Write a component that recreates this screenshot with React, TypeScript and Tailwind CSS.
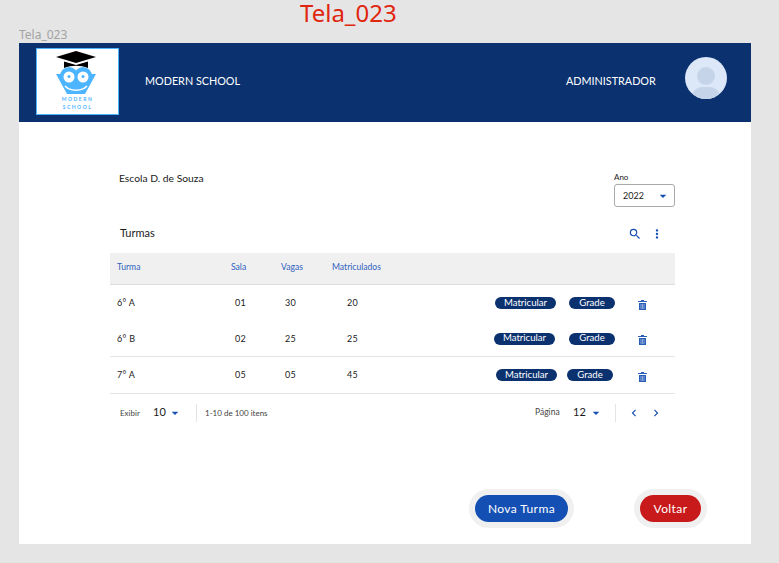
import { MdArrowDropDown, MdChevronLeft, MdChevronRight, MdMoreVert, MdSearch } from 'react-icons/md';

const turmas = [
  { nome: '6° A', sala: '01', vagas: '30', matriculados: '20', acoes: 'ml-[138px] gap-[13px]', linha: 'h-[36px]' },
  { nome: '6° B', sala: '02', vagas: '25', matriculados: '25', acoes: 'ml-[137px] gap-[14px]', linha: 'h-[36px] border-b border-[#e4e4e4]' },
  { nome: '7° A', sala: '05', vagas: '05', matriculados: '45', acoes: 'ml-[139px] gap-[10px]', linha: 'h-[37px] border-b border-[#e4e4e4]' },
];

function Logo() {
  return (
    <div className="flex h-[67px] w-[83px] flex-col items-center border border-[#4db5ff] bg-white">
      <svg viewBox="0 0 81 46" className="h-[46px] w-[81px] shrink-0">
        {/* capelo */}
        <path d="M19 8 39 2l20 6-20 6z" fill="#000" />
        <path d="M27 12.5V19c8-3 16-3 24 0v-6.500L39 16z" fill="#000" />
        {/* rosto */}
        <path d="M19 25H59L48 45H30z" fill="#4db5ff" />
        <circle cx="32" cy="27" r="9" fill="#4db5ff" />
        <circle cx="46" cy="27" r="9" fill="#4db5ff" />
        <circle cx="32" cy="28" r="5.500" fill="#fff" />
        <circle cx="46" cy="28" r="5.500" fill="#fff" />
        <circle cx="32" cy="27.500" r="1.500" fill="#4db5ff" />
        <circle cx="46" cy="27.500" r="1.500" fill="#4db5ff" />
        <path d="M28 37c5 5.500 17 5.500 22 0" stroke="#fff" strokeWidth="1.500" fill="none" />
      </svg>
      <span className="text-[5px] leading-[8px] font-bold tracking-[1.5px] text-[#4db5ff]">MODERN</span>
      <span className="text-[5px] leading-[8px] font-bold tracking-[1.5px] text-[#4db5ff]">SCHOOL</span>
    </div>
  );
}

function Lixeira() {
  return (
    <svg viewBox="0 0 9 10" className="mt-[3px] h-[10px] w-[9px] shrink-0 text-[#2a5db8]">
      <path d="M3 0h3v1h3v1H0V1h3z" fill="currentColor" />
      <path d="M1 3h7v7H1z" fill="currentColor" />
      <path d="M3 4v5M4.500 4v5M6 4v5" stroke="#c9d8f0" strokeWidth="0.600" />
    </svg>
  );
}

function Pill({ children, className }: { children: string; className: string }) {
  return (
    <span className={`flex h-3 items-center justify-center rounded-full bg-[#0b326f] text-[9.6px] text-white ${className}`}>
      {children}
    </span>
  );
}

export default function App() {
  return (
    <div className="h-[563px] w-[779px] overflow-hidden bg-[#e5e5e5] font-['Lato',sans-serif] text-[#1a1a1a]">
      <div className="h-[29px] pl-[300px] font-['Noto_Sans',sans-serif] text-[24px] leading-[25px] text-[#e0260f]">Tela_023</div>
      <div className="h-[14px] pl-[19px] font-['Noto_Sans',sans-serif] text-[12px] leading-[12px] text-[#a3a3a3]">Tela_023</div>

      <div className="ml-[19px] h-[501px] w-[732px] bg-white">
        {/* topo */}
        <header className="flex h-[79px] items-start bg-[#0b326f] pl-[17px] text-white">
          <div className="mt-[5px]">
            <Logo />
          </div>
          <span className="mt-[30px] ml-[26px] w-[421px] text-[10.8px] leading-4">MODERN SCHOOL</span>
          <span className="mt-[30px] w-[119px] text-[10.8px] leading-4">ADMINISTRADOR</span>
          <div className="relative mt-[14px] h-[42px] w-[42px] overflow-hidden rounded-full bg-[#dce7f8]">
            <div className="absolute top-[10px] left-[12px] h-[18px] w-[18px] rounded-full bg-[#c6d4ea]" />
            <div className="absolute top-[30px] left-[7px] h-[20px] w-[28px] rounded-full bg-[#c6d4ea]" />
          </div>
        </header>

        <div className="h-[63px] pt-[47px] pl-[100px] text-[10.3px] leading-[19px]">Escola D. de Souza</div>

        <div className="-mt-[13px] ml-[595px] w-[61px]">
          <div className="mb-[2px] text-[8px] leading-[10px]">Ano</div>
          <div className="flex h-[23px] items-center rounded-[3px] border border-[#aaaaaa] pr-[3px] pl-2 text-[9px]">
            <span className="flex-1">2022</span>
            <MdArrowDropDown className="text-[16px] text-[#1450b4]" />
          </div>
        </div>

        {/* tabela */}
        <div className="mt-[12px] ml-[91px] w-[565px]">
          <div className="flex h-[34px] items-start">
            <span className="ml-[10px] flex-1 text-[11px] leading-[28px]">Turmas</span>
            <MdSearch className="mt-[8px] mr-[8px] text-[14px] text-[#1450b4]" />
            <MdMoreVert className="mt-[8px] mr-[11px] text-[14px] text-[#1450b4]" />
          </div>

          <div className="flex h-[32px] items-center border-b border-[#dddddd] bg-[#f0f0f0] pb-[3px] pl-[7px] text-[8.6px] text-[#2f62c0]">
            <span className="w-[114px] shrink-0">Turma</span>
            <span className="w-[50px] shrink-0">Sala</span>
            <span className="w-[51px] shrink-0">Vagas</span>
            <span>Matriculados</span>
          </div>

          {turmas.map((turma) => (
            <div key={turma.nome} className={`flex items-center pl-[7px] text-[9px] tracking-[0.3px] ${turma.linha}`}>
              <span className="w-[118px] shrink-0">{turma.nome}</span>
              <span className="w-[50px] shrink-0">{turma.sala}</span>
              <span className="w-[62px] shrink-0">{turma.vagas}</span>
              <span className="w-[10px] shrink-0 whitespace-nowrap">{turma.matriculados}</span>
              <div className="w-[281px] shrink-0 tracking-normal">
                <div className={`flex ${turma.acoes}`}>
                  <Pill className="w-[61px]">Matricular</Pill>
                  <Pill className="w-[46px]">Grade</Pill>
                </div>
              </div>
              <Lixeira />
            </div>
          ))}

          <div className="flex h-[37px] items-center text-[8px]">
            <span className="ml-[10px] w-[33px] text-[#444444]">Exibir</span>
            <span className="w-[15px] text-[11px]">10</span>
            <MdArrowDropDown className="-ml-[1px] text-[16px] text-[#1450b4]" />
            <div className="mr-[8px] ml-[13px] h-[18px] w-px bg-[#e4e4e4]" />
            <span className="flex-1 text-[#444444]">1-10 de 100 itens</span>
            <span className="w-[38px] text-[8.5px] text-[#444444]">Página</span>
            <span className="w-[15px] text-[11px]">12</span>
            <MdArrowDropDown className="text-[16px] text-[#1450b4]" />
            <div className="mr-[11px] ml-[11px] h-[18px] w-px bg-[#e4e4e4]" />
            <MdChevronLeft className="text-[14px] text-[#1450b4]" />
            <MdChevronRight className="mr-[12px] ml-[8px] text-[14px] text-[#1450b4]" />
          </div>
        </div>

        {/* ações */}
        <div className="mt-[58px] flex pl-[450px]">
          <button className="h-[39px] w-[105px] rounded-full bg-[#f0f0f0] p-[6px]">
            <span className="flex h-full items-center justify-center rounded-full bg-[#1450b4] text-[12px] tracking-[0.4px] text-white">Nova Turma</span>
          </button>
          <button className="ml-[60px] h-[39px] w-[73px] rounded-full bg-[#f0f0f0] p-[6px]">
            <span className="flex h-full items-center justify-center rounded-full bg-[#c81a1a] text-[12px] tracking-[0.4px] text-white">Voltar</span>
          </button>
        </div>
      </div>
    </div>
  );
}
